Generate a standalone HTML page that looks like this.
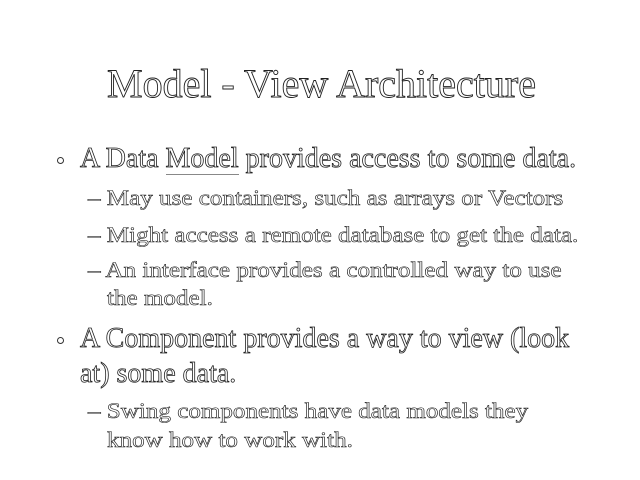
<!DOCTYPE html>
<html><head><style>
body{margin:0;width:640px;height:480px;background:#fff;overflow:hidden;position:relative;font-family:"Liberation Serif",serif;}
.t{position:absolute;white-space:nowrap;color:#fff;-webkit-text-stroke:0.9px #222;line-height:1;transform-origin:0 0;}
.h{font-size:40px;}
.b{font-size:28px;-webkit-text-stroke:0.8px #222;}
.s{font-size:22px;-webkit-text-stroke:0.6px #222;transform:scaleX(1.14);}
.dot{position:absolute;width:5px;height:5px;border:1px solid #333;border-radius:50%;}
u{text-decoration:none;border-bottom:1px solid #888;}
</style></head><body>
<div class="t h" style="left:107px;top:64px;">Model - View Architecture</div>
<div class="dot" style="left:57px;top:157px;"></div>
<div class="t b" style="left:80px;top:145px;">A Data <u>Model</u> provides access to some data.</div>
<div class="t s" style="left:88px;top:187px;">– May use containers, such as arrays or Vectors</div>
<div class="t s" style="left:88px;top:224px;">– Might access a remote database to get the data.</div>
<div class="t s" style="left:88px;top:259px;">– An interface provides a controlled way to use</div>
<div class="t s" style="left:107px;top:287px;">the model.</div>
<div class="dot" style="left:57px;top:337px;"></div>
<div class="t b" style="left:80px;top:325px;">A Component provides a way to view (look</div>
<div class="t b" style="left:80px;top:360px;">at) some data.</div>
<div class="t s" style="left:88px;top:400px;">– Swing components have data models they</div>
<div class="t s" style="left:107px;top:429px;">know how to work with.</div>
</body></html>
